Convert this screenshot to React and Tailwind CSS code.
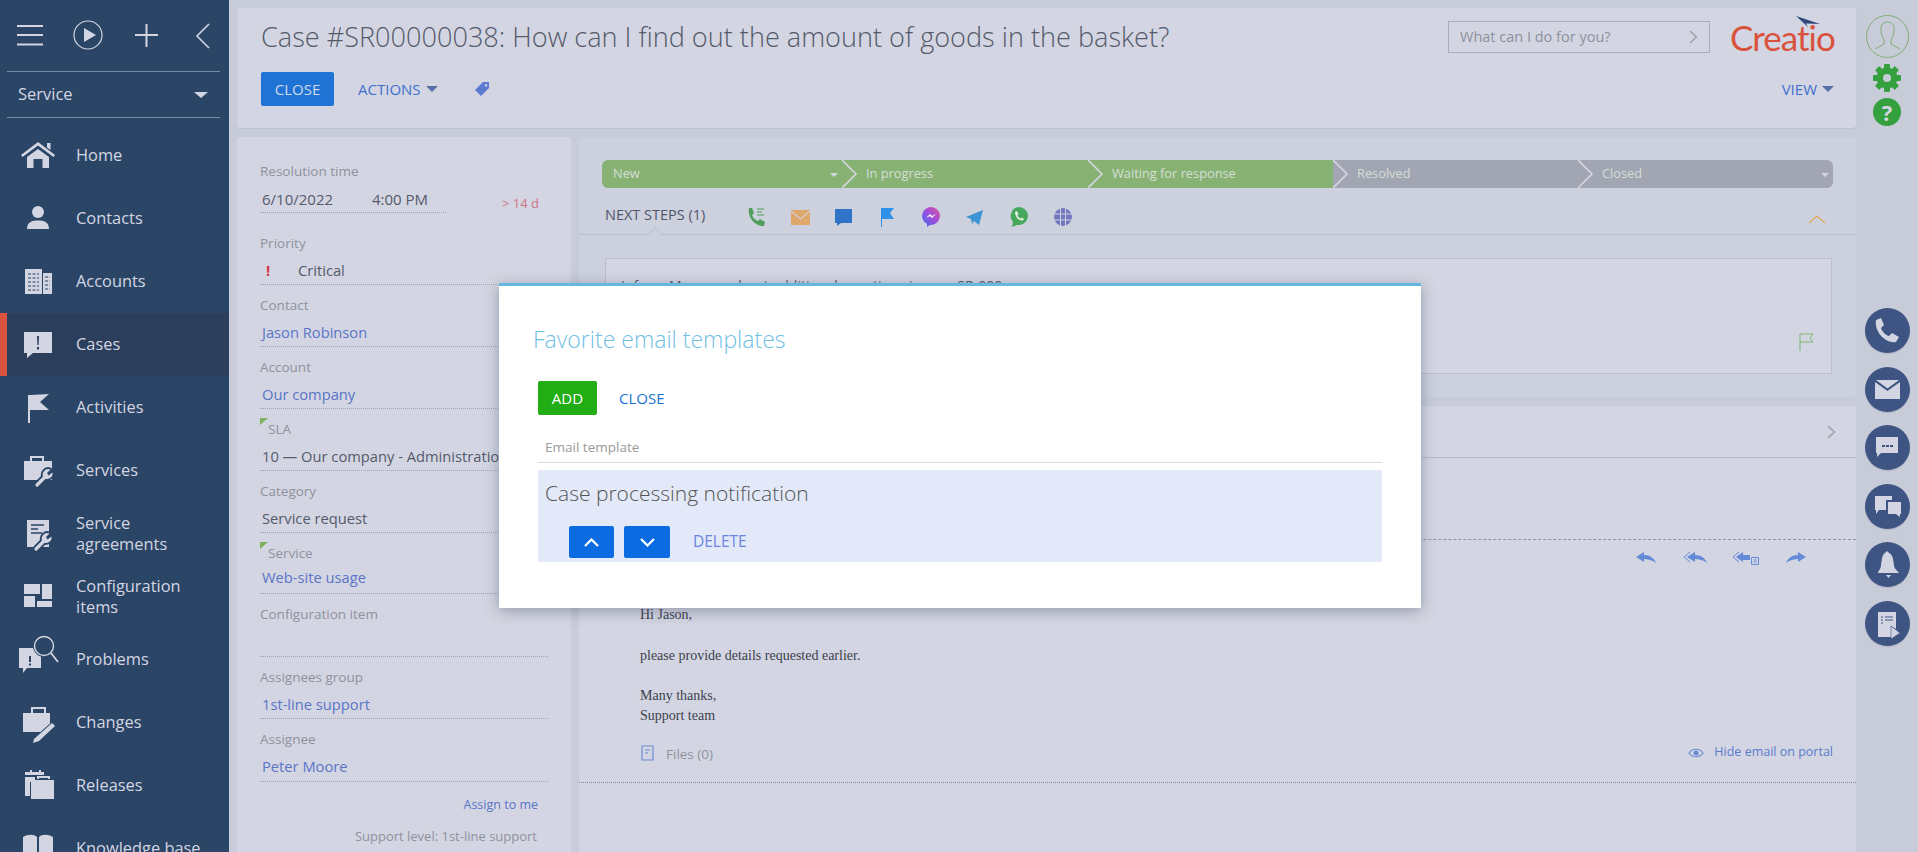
import React from "react";

const light = "#d3d6e2";
const navy = "#2b4566";

const wrenchHead = "M7 7 A5.5 5.5 0 0 1 13.5 -1.5 L10 2 L11.5 4.5 L15.5 1.5 A5.5 5.5 0 0 1 7 7Z";

const Wrench = ({ x = 0, y = 0 }) => (
  <g transform={`translate(${x} ${y})`}>
    <path d="M0 14 L9 5" stroke={navy} strokeWidth="7" fill="none" />
    <path d={wrenchHead} fill={navy} stroke={navy} strokeWidth="3.5" />
    <path d="M0 14 L9 5" stroke={light} strokeWidth="3.2" strokeLinecap="round" fill="none" />
    <path d={wrenchHead} fill={light} />
  </g>
);

const navIcons = {
  home: (
    <>
      <path d="M20 7 L37 20 L35.5 22 L20 10.5 L4.5 22 L3 20Z" />
      <path d="M29 8h3.5v7L29 12.5z" />
      <path d="M9 22 L20 14 L31 22 V33 H24.5 V24 H15.5 V33 H9Z" />
    </>
  ),
  contacts: (
    <>
      <circle cx="20" cy="14" r="6" />
      <path d="M9 31 C9 24 14 22.5 20 22.5 C26 22.5 31 24 31 31Z" />
    </>
  ),
  accounts: (
    <>
      <rect x="7" y="8" width="17" height="25" />
      <path d="M25 12h9v21h-9z" />
      <path d="M10 13h11M10 17h11M10 21h11M10 25h11M10 29h11M27 16h5M27 20h5M27 24h5M27 28h5" stroke={navy} strokeWidth="1.2" strokeDasharray="3 1.5" fill="none" />
    </>
  ),
  cases: (
    <>
      <path d="M6 8 H34 V29 H15 L9 34 V29 H6Z" />
      <path d="M19 12h2l-.4 9h-1.2zM19 23h2v2.5h-2z" fill="#2b3e5c" />
    </>
  ),
  activities: (
    <>
      <rect x="10" y="8" width="2" height="28" />
      <path d="M12 8 L31 7 L22 15 L31 23 H12Z" />
    </>
  ),
  services: (
    <>
      <path d="M12 6h14v5h-2V8H14v3h-2z" />
      <path d="M6 11H34V30H6Z" />
      <Wrench x={19} y={21} />
    </>
  ),
  agreements: (
    <>
      <path d="M9 7H31V34H9Z" />
      <path d="M13 12h13M13 16h7M13 20h11" stroke={navy} strokeWidth="1.4" fill="none" />
      <Wrench x={18} y={22} />
    </>
  ),
  config: (
    <>
      <rect x="6" y="8" width="16" height="10" />
      <rect x="24" y="8" width="10" height="15" />
      <rect x="6" y="20" width="11" height="11" />
      <rect x="19" y="25" width="15" height="6" />
    </>
  ),
  problems: (
    <>
      <path d="M1 9H23V29H9L5 34V29H1Z" />
      <circle cx="26" cy="7" r="11" fill={navy} />
      <circle cx="26" cy="7" r="9.5" fill="none" stroke={light} strokeWidth="1.4" />
      <path d="M33 14 L40 23" stroke={light} strokeWidth="1.8" />
      <path d="M11 17h2v6h-2zM11 24.5h2v2h-2z" fill={navy} />
    </>
  ),
  changes: (
    <>
      <path d="M13 5h15v6h-2V7H15v4h-2z" />
      <path d="M5 11H32V30H5Z" />
      <path d="M16 37 L34 21 L37 24 L21 39 L15 41Z" stroke={navy} strokeWidth="2" paintOrder="stroke" />
    </>
  ),
  releases: (
    <>
      <path d="M7 7h5V5h2v2h7V5h2v2h3v3H7z" />
      <path d="M7 12h10v5h-5v14H7z" />
      <path d="M19 11h13v3h-2v-1H21v1h-2z" />
      <path d="M13 15H36V34H13Z" />
    </>
  ),
  knowledge: (
    <path d="M5 9 C10 6 16 6 19 9 V33 C15 31 10 31 5 33Z M21 9 C24 6 30 6 35 9 V33 C30 31 25 31 21 33Z" />
  ),
};

const navItems = [
  { key: "home", label: "Home" },
  { key: "contacts", label: "Contacts" },
  { key: "accounts", label: "Accounts" },
  { key: "cases", label: "Cases", active: true },
  { key: "activities", label: "Activities" },
  { key: "services", label: "Services" },
  { key: "agreements", label: ["Service", "agreements"] },
  { key: "config", label: ["Configuration", "items"] },
  { key: "problems", label: "Problems" },
  { key: "changes", label: "Changes" },
  { key: "releases", label: "Releases" },
  { key: "knowledge", label: "Knowledge base" },
];

const Sidebar = () => (
  <div className="w-[229px] shrink-0 bg-[#2b4566] text-[#d3d6e2] overflow-hidden">
    <div className="h-[71px] flex items-center">
      <svg width="229" height="71" viewBox="0 0 229 71" fill="none" stroke="#d3d6e2">
        <path d="M17 26h26M17 35h26M17 44.5h26" strokeWidth="2" />
        <circle cx="88" cy="35" r="14" strokeWidth="1.2" />
        <path d="M84 28 L96 35 L84 42Z" fill="#d3d6e2" stroke="none" />
        <path d="M135 35h23M146.5 24v23" strokeWidth="2" />
        <path d="M209 24 L197 36 L209 48" strokeWidth="1.6" />
      </svg>
    </div>
    <div className="mx-[7px] w-[213px] h-[47px] border-y border-[#7a8aa3] flex items-center justify-between pl-[11px] pr-[12px] text-[16.5px]">
      <span>Service</span>
      <span className="w-0 h-0 border-x-[7px] border-x-transparent border-t-[6px] border-t-[#d3d6e2]" />
    </div>
    <div className="mt-[6px]">
      {navItems.map((item) => (
        <div
          key={item.key}
          className={`h-[63px] flex items-center ${item.active ? "bg-[#2b3e5c] shadow-[inset_7px_0_0_#d9523d]" : ""}`}
        >
          <div className="w-[76px] shrink-0 pl-[18px]">
            <svg width="42" height="42" viewBox="0 0 42 42" fill={light} className="overflow-visible">
              {navIcons[item.key]}
            </svg>
          </div>
          <div className="mb-[2px] text-[16.4px] leading-[21px] whitespace-nowrap">
            {Array.isArray(item.label) ? item.label.map((l) => <div key={l}>{l}</div>) : item.label}
          </div>
        </div>
      ))}
    </div>
  </div>
);

const Caret = ({ color = "#5a71a8" }) => (
  <svg width="12" height="6" viewBox="0 0 12 6" style={{ fill: color }}>
    <path d="M0 0h12L6 6z" />
  </svg>
);

const TopPanel = () => (
  <div className="h-[120px] bg-[#d3d6e2] rounded-[3px] pl-[24px] pr-[22px] pt-[13px] shadow-[0_1px_1px_#bcc0cd]">
    <div className="flex items-center h-[32px]">
      <div className="text-[27.1px] font-light text-[#555a6b] whitespace-nowrap leading-[32px]">
        Case #SR00000038: How can I find out the amount of goods in the basket?
      </div>
      <div className="ml-auto w-[262px] h-[32px] border border-[#a8abb9] flex items-center justify-between pl-[11px] pr-[11px] text-[14.5px] text-[#8e909e]">
        <span>What can I do for you?</span>
        <svg width="9" height="14" viewBox="0 0 9 14" fill="none" stroke="#9a9caa" strokeWidth="1.3">
          <path d="M1 1l6.5 6L1 13" />
        </svg>
      </div>
      <div className="ml-[20px] w-[104px] relative h-[32px]">
        <span className="font-['Lato',sans-serif] font-normal text-[35px] leading-[32px] tracking-[-1px] text-[#d9523d]">Creatio</span>
        <svg width="26" height="12" viewBox="0 0 26 12" className="absolute left-[66px] top-[-5px] overflow-visible">
          <path d="M0 0 L24 8 L10 7.5 L12 11Z" fill="#2f4a7d" />
        </svg>
      </div>
    </div>
    <div className="flex items-center h-[34px] mt-[19px] text-[15px]">
      <div className="w-[73px] h-[34px] rounded-[2px] bg-[#1f73d4] text-[#cfdcec] flex items-center justify-center">CLOSE</div>
      <div className="ml-[24px] text-[#3f6fd0]">ACTIONS</div>
      <div className="ml-[5px]"><Caret /></div>
      <svg width="16" height="16" viewBox="0 0 16 16" className="ml-[36px]">
        <path d="M9 1 H15 V7 L7 15 L1 9Z M12 3a1.3 1.3 0 1 0 .01 0Z" fill="#5a7bd0" fillRule="evenodd" />
      </svg>
      <div className="ml-auto text-[#3f6fd0]">VIEW</div>
      <div className="ml-[5px]"><Caret /></div>
    </div>
  </div>
);

const Corner = () => (
  <svg width="8" height="7" viewBox="0 0 8 7" className="absolute left-0 top-[-3px]">
    <path d="M0 0h8L0 7z" fill="#7cb35a" />
  </svg>
);

const fields = [
  { label: "Contact", value: "Jason Robinson", link: true, h: "h-[62px]", gap: "mt-[9px]" },
  { label: "Account", value: "Our company", link: true, h: "h-[62px]", gap: "mt-[9px]" },
  { label: "SLA", value: "10 — Our company - Administration", corner: true, h: "h-[62px]", gap: "mt-[9px]" },
  { label: "Category", value: "Service request", h: "h-[62px]", gap: "mt-[9px]" },
  { label: "Service", value: "Web-site usage", link: true, corner: true, h: "h-[61px]", gap: "mt-[6px]" },
  { label: "Configuration item", value: "", h: "h-[63px]", gap: "mt-[9px]" },
  { label: "Assignees group", value: "1st-line support", link: true, h: "h-[62px]", gap: "mt-[9px]" },
  { label: "Assignee", value: "Peter Moore", link: true, h: "h-[63px]", gap: "mt-[9px]" },
];

const Field = ({ label, value, link, corner, h, gap }) => (
  <div className={`${h} border-b border-dotted border-[#a0a3b0] pt-[12px]`}>
    <div className={`relative text-[13.5px] leading-[16px] text-[#8f919e] ${corner ? "pl-[8px]" : ""}`}>
      {corner && <Corner />}
      {label}
    </div>
    <div className={`${gap} pl-[2px] text-[14.7px] leading-[20px] whitespace-nowrap ${link ? "text-[#5a74c8]" : "text-[#555a6b]"}`}>
      {value}
    </div>
  </div>
);

const LeftPanel = () => (
  <div className="w-[334px] shrink-0 bg-[#d3d6e2] rounded-t-[3px] px-[23px] pt-[26px]">
    <div className="text-[13.5px] leading-[16px] text-[#8f919e]">Resolution time</div>
    <div className="flex">
      <div className="w-[186px] h-[34px] pt-[10px] pl-[2px] flex border-b border-dotted border-[#a0a3b0] text-[15px] leading-[20px] text-[#555a6b]">
        <span className="w-[110px]">6/10/2022</span>
        <span>4:00 PM</span>
      </div>
      <div className="ml-[56px] mt-[16px] text-[13px] leading-[16px] text-[#cf7486]">&gt; 14 d</div>
    </div>
    <div className="h-[72px] border-b border-dotted border-[#a0a3b0] pt-[22px]">
      <div className="text-[13.5px] leading-[16px] text-[#8f919e]">Priority</div>
      <div className="flex mt-[9px] text-[14.7px] leading-[20px] text-[#555a6b]">
        <span className="w-[38px] pl-[6px] font-bold text-[#d6333f]">!</span>
        <span>Critical</span>
      </div>
    </div>
    {fields.map((f) => (
      <Field key={f.label} {...f} />
    ))}
    <div className="mt-[15px] pr-[10px] text-right text-[12.5px] leading-[16px] text-[#5a74c8]">Assign to me</div>
    <div className="mt-[15px] pr-[11px] text-right text-[13px] leading-[16px] text-[#8f919e]">Support level: 1st-line support</div>
  </div>
);

const stages = [
  { label: "New", w: "w-[240px]", bg: "bg-[#88b274]", first: true },
  { label: "In progress", w: "w-[246px]", bg: "bg-[#88b274]" },
  { label: "Waiting for response", w: "w-[245px]", bg: "bg-[#88b274]" },
  { label: "Resolved", w: "w-[245px]", bg: "bg-[#a2a5b2]" },
  { label: "Closed", w: "w-[255px]", bg: "bg-[#a2a5b2]", last: true },
];

const StatusBar = () => (
  <div className="flex h-[28px] w-[1231px] rounded-[6px] overflow-hidden text-[12.8px] text-[#d5dfd6]">
    {stages.map((s) => (
      <div key={s.label} className={`relative ${s.w} ${s.bg} flex items-center ${s.first ? "pl-[11px]" : "pl-[24px]"}`}>
        {!s.first && (
          <svg width="16" height="28" viewBox="0 0 16 28" fill="none" stroke="#d3d6e2" strokeWidth="1.6" className="absolute left-0 top-0">
            <path d="M0 0 L14 14 L0 28" />
          </svg>
        )}
        <span>{s.label}</span>
        {(s.first || s.last) && (
          <span className="absolute right-[4px] top-[13px] w-0 h-0 border-x-[4px] border-x-transparent border-t-[4px] border-t-[#d3d6e2]" />
        )}
      </div>
    ))}
  </div>
);

const StepIcons = () => (
  <div className="flex items-center">
    <svg width="18" height="20" viewBox="0 0 18 20" className="ml-[42px]">
      <path d="M2 1 L5 1 L7 6 L5 8 C6 11 8 13 11 14 L13 12 L18 15 L17 19 C9 20 0 11 2 1Z" fill="#4f9f5a" />
      <path d="M10 2h7M10 5h5M10 8h7" stroke="#4f9f5a" strokeWidth="1.2" />
    </svg>
    <svg width="19" height="15" viewBox="0 0 19 15" className="ml-[26px]">
      <path d="M0 0H19V15H0Z" fill="#dfa76a" />
      <path d="M0 1 L9.5 9 L19 1" stroke="#cdd1dd" strokeWidth="1.2" fill="none" />
    </svg>
    <svg width="17" height="17" viewBox="0 0 17 17" className="ml-[25px]">
      <path d="M0 0H17V14H6L2 17V14H0Z" fill="#2f74c8" />
    </svg>
    <svg width="13" height="19" viewBox="0 0 13 19" className="ml-[29px]">
      <path d="M0 0h1v19H0zM1 0h12L9 5l4 6H1z" fill="#2f92ea" />
    </svg>
    <svg width="18" height="20" viewBox="0 0 18 20" className="ml-[28px]">
      <defs>
        <linearGradient id="msg" x1="0" y1="1" x2="1" y2="0">
          <stop offset="0" stopColor="#3f6ee8" />
          <stop offset="0.5" stopColor="#9a4fe0" />
          <stop offset="1" stopColor="#e0509a" />
        </linearGradient>
      </defs>
      <path d="M9 0a9 9 0 0 1 0 18 H8 L5 20 V17 A9 9 0 0 1 9 0Z" fill="url(#msg)" />
      <path d="M4 11 L8 7 L10 9 L14 7 L10 11 L8 9Z" fill="#fff" />
    </svg>
    <svg width="17" height="15" viewBox="0 0 17 15" className="ml-[26px]">
      <path d="M0 7 L17 0 L13 15 L8 11 L6 14 L5 9Z" fill="#3b94d4" />
    </svg>
    <svg width="18" height="20" viewBox="0 0 18 20" className="ml-[27px]">
      <path d="M9 0a9 9 0 0 1 0 18 H7 L2 20 L3 15 A9 9 0 0 1 9 0Z" fill="#46a85c" />
      <path d="M5 5 L7 4 L8.5 7 L7.5 8 C8 10 9 11 11 11.5 L12 10.5 L14 12 L13 13.5 C9 14 5 10 5 5Z" fill="#e4ecdf" />
    </svg>
    <svg width="18" height="18" viewBox="0 0 18 18" className="ml-[26px]">
      <circle cx="9" cy="9" r="9" fill="#7379c0" />
      <path d="M0 6h18M0 12h18M6.5 0v18M11.5 0v18" stroke="#cdd1dd" strokeWidth="1" />
    </svg>
  </div>
);

const TopRight = () => (
  <div className="h-[260px] bg-[#cdd1dd] rounded-[3px] pt-[23px] flex flex-col">
    <div className="pl-[23px]">
      <StatusBar />
    </div>
    <div className="relative h-[47px] border-b border-[#bcc0cd] flex items-center pl-[26px] pt-[12px] pr-[30px]">
      <span className="text-[14.5px] mb-[4px] text-[#50546d] whitespace-nowrap">NEXT STEPS (1)</span>
      <StepIcons />
      <svg width="18" height="9" viewBox="0 0 18 9" fill="none" stroke="#dfa850" strokeWidth="1.2" className="ml-auto mb-[-4px]">
        <path d="M1 8 L9 1 L17 8" />
      </svg>
      <svg width="14" height="7" viewBox="0 0 14 7" className="absolute left-[69px] bottom-[-1px]">
        <path d="M0 7 L7 0 L14 7" fill="#cdd1dd" stroke="#bcc0cd" />
      </svg>
    </div>
    <div className="mt-[23px] ml-[26px] w-[1227px] h-[116px] bg-[#d3d6e2] border border-[#bcc0cd] flex flex-col">
      <div className="pl-[15px] pt-[17px] text-[14px] leading-[20px] text-[#555a6b]">
        Inform Manager about additional questions in case SR-000
      </div>
      <svg width="14" height="18" viewBox="0 0 14 18" fill="none" stroke="#7fb56f" strokeWidth="1" className="self-end mt-auto mr-[18px] mb-[22px]">
        <path d="M1 18V1H14L11 5L14 9H1" />
      </svg>
    </div>
  </div>
);

const ReplyIcons = () => (
  <div className="h-[36px] flex items-center justify-end pr-[50px]">
    <svg width="20" height="12" viewBox="0 0 20 12" fill="#648ad8">
      <path d="M0 5 L8 0 V3 C14 3 18 6 20 11 C16 8 12 7 8 7 V10Z" />
    </svg>
    <svg width="23" height="12" viewBox="0 0 23 12" className="ml-[28px]" fill="#648ad8">
      <path d="M3 5 L11 0 V3 C17 3 21 6 23 11 C19 8 15 7 11 7 V10Z" />
      <path d="M6 0 L0 5 L6 10" fill="none" stroke="#648ad8" />
    </svg>
    <svg width="26" height="13" viewBox="0 0 26 13" className="ml-[26px]" fill="#648ad8">
      <path d="M3 5 L10 0 V3 H17 V8 H10 V10Z" />
      <path d="M6 0 L0 5 L6 10" fill="none" stroke="#648ad8" />
      <path d="M18.5 5.5h7v7h-7zM20.5 8h3M20.5 10h3" fill="none" stroke="#648ad8" />
    </svg>
    <svg width="20" height="12" viewBox="0 0 20 12" className="ml-[27px]" fill="#648ad8">
      <path d="M20 5 L12 0 V3 C6 3 2 6 0 11 C4 8 8 7 12 7 V10Z" />
    </svg>
  </div>
);

const BottomRight = () => (
  <div className="flex-1 bg-[#d3d6e2] rounded-t-[3px] text-[#555a6b]">
    <div className="h-[52px] border-b border-[#b8bbc9] flex items-center justify-end pr-[20px]">
      <svg width="9" height="14" viewBox="0 0 9 14" fill="none" stroke="#9a9caa" strokeWidth="1.3">
        <path d="M1 1l6.5 6L1 13" />
      </svg>
    </div>
    <div className="h-[82px] border-b border-dashed border-[#8d92a8]" />
    <ReplyIcons />
    <div className="mt-[29px] pl-[61px] font-['Liberation_Serif',serif] text-[14px] leading-[20px] text-[#3c3f4e]">
      <p className="mb-[21px]">Hi Jason,</p>
      <p className="mb-[20px]">please provide details requested earlier.</p>
      <p>Many thanks,</p>
      <p>Support team</p>
    </div>
    <div className="mt-[15px] pb-[18px] h-[42px] border-b border-dotted border-[#7e8ab0] flex items-center pl-[62px] pr-[23px]">
      <svg width="13" height="16" viewBox="0 0 13 16" fill="none" stroke="#6d8bd4" strokeWidth="1.2">
        <path d="M1 1h11v14H1zM4 5h5M4 8h3" />
      </svg>
      <span className="ml-[12px] mt-[3px] text-[13.5px] text-[#8f919e]">Files (0)</span>
      <svg width="16" height="14" viewBox="0 0 16 14" fill="none" stroke="#6d8bd4" strokeWidth="1.2" className="ml-auto">
        <path d="M1 7 C4 2 12 2 15 7 C12 12 4 12 1 7Z" />
        <circle cx="8" cy="7" r="2" fill="#6d8bd4" />
      </svg>
      <span className="ml-[10px] text-[12.5px] text-[#5a7ad0]">Hide email on portal</span>
    </div>
  </div>
);

const railIcons = [
  <path key="phone" d="M11 12 L16 10 L19 17 L16 20 C17 23 20 27 24 28 L27 25 L34 29 L31 34 C21 36 9 24 11 12Z" />,
  <g key="mail">
    <path d="M10 15 L22.500 24 L35 15 V32 H10Z" />
    <path d="M11 13 H34 L22.500 21.500Z" />
  </g>,
  <g key="chat">
    <path d="M11 12H33V28H16L12 32V28H11Z" />
    <path d="M17 20h3v2h-3zM21 20h3v2h-3zM25 20h3v2h-3z" fill="#3e5583" />
  </g>,
  <g key="chats">
    <path d="M10 12H27V16H21V26H14L11 30V26H10Z" />
    <path d="M23 18H36V30H35V33L31 30H23Z" />
  </g>,
  <g key="bell">
    <path d="M22 9 L24 11 C28 13 28 17 29 23 C29 27 33 29 34 31 H13 C13 29 16 27 16 23 C17 17 17 13 20 11Z" />
    <path d="M21 33h5l-2.500 3z" />
  </g>,
  <g key="doc">
    <path d="M13 11H31V28L26 25V36H13Z" />
    <path d="M16 16h2M20 16h8M16 19h2M20 19h8M16 22h2" stroke="#3e5583" strokeWidth="1.2" />
    <path d="M26 25 L35 32 L26 38Z" stroke="#3e5583" strokeWidth="0.6" />
  </g>,
];

const RightRail = () => (
  <div className="w-[62px] shrink-0 flex flex-col items-center pt-[15px]">
    <svg width="43" height="43" viewBox="0 0 43 43" fill="none" stroke="#7fae72" strokeWidth="1">
      <circle cx="21.5" cy="21.5" r="21" />
      <path d="M21.5 7 C16 7 14.5 11 15 16 C15.3 20 16.5 23 18 25 V29 L9 34 M21.5 7 C27 7 28.5 11 28 16 C27.7 20 26.5 23 25 25 V29 L34 34" />
    </svg>
    <svg width="28" height="28" viewBox="0 0 28 28" className="mt-[6px]">
      <circle cx="14" cy="14" r="7.5" fill="none" stroke="#35a13e" strokeWidth="6" />
      {[0, 45, 90, 135].map((a) => (
        <rect key={a} x="11" y="0" width="6" height="28" rx="1" fill="#35a13e" transform={`rotate(${a} 14 14)`} />
      ))}
      <circle cx="14" cy="14" r="4" fill="#c8ccd9" />
    </svg>
    <div className="mt-[6px] w-[28px] h-[28px] rounded-full bg-[#35a13e] text-[#d3d6e2] text-[22px] font-bold leading-[28px] text-center">?</div>
    <div className="mt-[182px] flex flex-col gap-[13.5px]">
      {railIcons.map((icon, i) => (
        <div key={i} className="w-[45px] h-[45px] rounded-full bg-[#3e5583] shadow-[0_1px_1px_#aeb2c2]">
          <svg width="45" height="45" viewBox="0 0 45 45" fill={light}>
            {icon}
          </svg>
        </div>
      ))}
    </div>
  </div>
);

const TemplatesDialog = () => (
  <div className="absolute left-[499px] top-[283px] w-[922px] h-[325px] bg-white border-t-[3px] border-[#62b8e0] shadow-[0_3px_14px_rgba(70,75,100,0.45)] px-[39px]">
    <div className="pt-[38px] ml-[-5px] text-[23px] leading-[30px] font-light text-[#6fc0e6]">Favorite email templates</div>
    <div className="flex items-center mt-[27px] text-[15px]">
      <div className="w-[59px] h-[34px] rounded-[2px] bg-[#22ad14] text-white flex items-center justify-center">ADD</div>
      <div className="ml-[22px] text-[#1a73d8]">CLOSE</div>
    </div>
    <div className="mt-[19px] h-[29px] border-b border-[#dddddd] pl-[7px] text-[13.5px] leading-[26px] text-[#9a9a9a]">Email template</div>
    <div className="mt-[7px] h-[92px] bg-[#e3e9f8] pl-[7px]">
      <div className="pt-[8px] text-[21px] leading-[30px] font-light text-[#555555]">Case processing notification</div>
      <div className="flex items-center mt-[18px] ml-[24px]">
        <div className="w-[45px] h-[32px] rounded-[2px] bg-[#0a6ce0] flex items-center justify-center">
          <svg width="15" height="9" viewBox="0 0 15 9" fill="none" stroke="#fff" strokeWidth="2.2"><path d="M1 8l6.5-6.5L14 8" /></svg>
        </div>
        <div className="ml-[10px] w-[46px] h-[32px] rounded-[2px] bg-[#0a6ce0] flex items-center justify-center">
          <svg width="15" height="9" viewBox="0 0 15 9" fill="none" stroke="#fff" strokeWidth="2.2"><path d="M1 1l6.5 6.5L14 1" /></svg>
        </div>
        <div className="ml-[23px] text-[15.5px] text-[#6a85de]">DELETE</div>
      </div>
    </div>
  </div>
);

export default function App() {
  return (
    <div className="relative flex w-[1918px] h-[852px] overflow-hidden bg-[#c8ccd9] font-['Open_Sans',sans-serif]">
      <Sidebar />
      <div className="w-[1627px] shrink-0 pl-[8px] pt-[8px] flex flex-col gap-[9px]">
        <TopPanel />
        <div className="flex-1 flex gap-[8px] min-h-0">
          <LeftPanel />
          <div className="flex-1 flex flex-col gap-[9px]">
            <TopRight />
            <BottomRight />
          </div>
        </div>
      </div>
      <RightRail />
      <TemplatesDialog />
    </div>
  );
}
